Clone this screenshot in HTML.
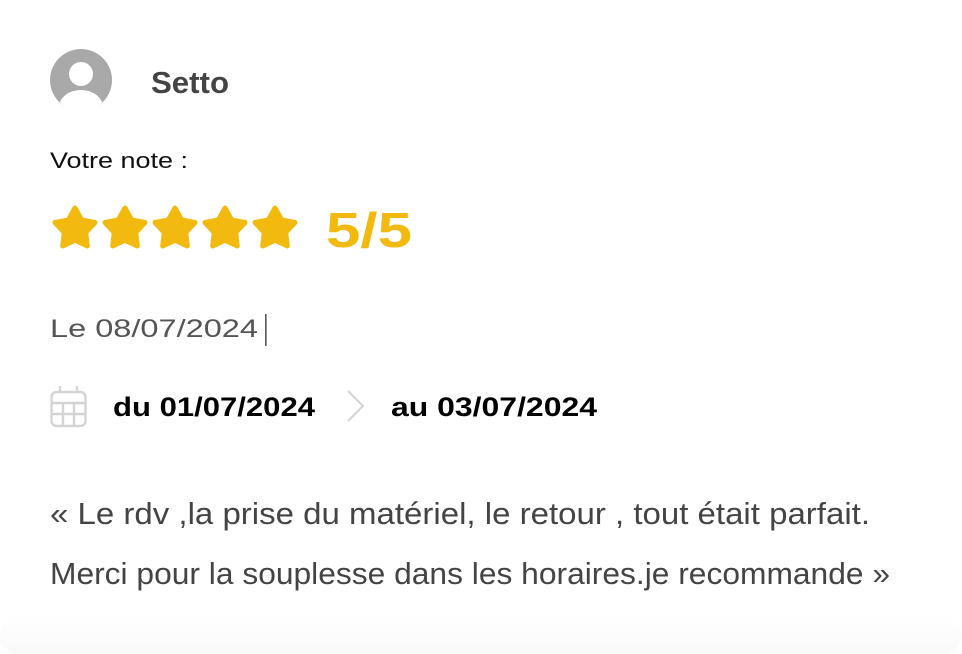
<!DOCTYPE html>
<html><head><meta charset="utf-8"><style>
html,body{margin:0;padding:0;background:#fff;width:962px;height:654px;overflow:hidden}
svg{display:block}
</style></head><body>
<svg width="962" height="654" viewBox="0 0 962 654" xmlns="http://www.w3.org/2000/svg" font-family="Liberation Sans, sans-serif">
<defs>
<linearGradient id="sh" x1="0" y1="0" x2="0" y2="1">
<stop offset="0" stop-color="#fff"/><stop offset="1" stop-color="#f9f9f9"/>
</linearGradient>
<clipPath id="av"><circle cx="81" cy="80" r="31"/></clipPath>
<g id="st"><polygon points="0,-21 6.6,-9.1 20,-6.5 10.7,3.5 12.3,17 0,11.2 -12.3,17 -10.7,3.5 -20,-6.5 -6.6,-9.1" fill="#f2b90f" stroke="#f2b90f" stroke-width="5" stroke-linejoin="round"/></g>
</defs>
<rect x="0" y="612" width="962" height="46" rx="30" fill="url(#sh)"/>
<rect x="0" y="0" width="962" height="616" fill="#fff"/>
<g clip-path="url(#av)">
<rect x="50" y="49" width="62" height="58" fill="#a9a9a9"/>
<circle cx="81" cy="74" r="12" fill="#fff"/>
<ellipse cx="81" cy="107" rx="22" ry="17" fill="#fff"/>
</g>
<rect x="50" y="106" width="62" height="10" fill="#fff"/>
<text x="151" y="93" font-size="31" font-weight="bold" fill="#444" textLength="78" lengthAdjust="spacingAndGlyphs">Setto</text>
<text x="50" y="168" font-size="22" fill="#111" textLength="138" lengthAdjust="spacingAndGlyphs">Votre note :</text>
<use href="#st" x="75" y="229"/><use href="#st" x="125" y="229"/><use href="#st" x="175" y="229"/><use href="#st" x="225" y="229"/><use href="#st" x="275" y="229"/>
<text x="326" y="247" font-size="49" font-weight="bold" fill="#f2b90f" textLength="86" lengthAdjust="spacingAndGlyphs">5/5</text>
<text x="50" y="337" font-size="25" fill="#555" textLength="208" lengthAdjust="spacingAndGlyphs">Le 08/07/2024</text>
<rect x="265" y="314" width="1.6" height="32" fill="#555"/>
<g fill="none" stroke="#d4d4d4" stroke-width="2.4">
<rect x="51.5" y="392" width="34" height="34" rx="5"/>
<line x1="51.5" y1="403" x2="85.5" y2="403"/>
<line x1="51.5" y1="414" x2="85.5" y2="414"/>
<line x1="63" y1="403" x2="63" y2="426"/>
<line x1="74" y1="403" x2="74" y2="426"/>
<line x1="60" y1="386" x2="60" y2="393"/>
<line x1="77" y1="386" x2="77" y2="393"/>
<polyline points="348,391 363,406 348,421" stroke-width="2"/>
</g>
<text x="113" y="416" font-size="27" font-weight="bold" fill="#000" textLength="202" lengthAdjust="spacingAndGlyphs">du 01/07/2024</text>
<text x="391" y="416" font-size="27" font-weight="bold" fill="#000" textLength="206" lengthAdjust="spacingAndGlyphs">au 03/07/2024</text>
<text x="50" y="524" font-size="31" fill="#444" textLength="820" lengthAdjust="spacingAndGlyphs">« Le rdv ,la prise du matériel, le retour , tout était parfait.</text>
<text x="50" y="584" font-size="31" fill="#444" textLength="840" lengthAdjust="spacingAndGlyphs">Merci pour la souplesse dans les horaires.je recommande »</text>
</svg>
</body></html>
